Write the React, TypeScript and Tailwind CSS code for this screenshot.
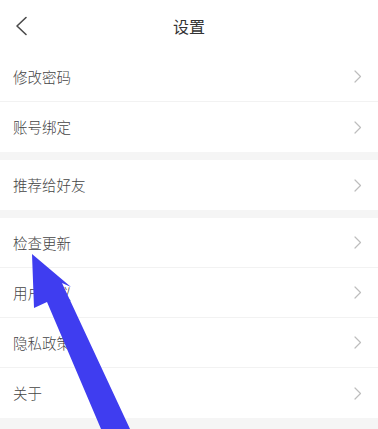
import React from "react";

const groups: string[][] = [
  ["修改密码", "账号绑定"],
  ["推荐给好友"],
  ["检查更新", "用户协议", "隐私政策", "关于"],
];

function Chevron() {
  return (
    <svg width="8" height="13" viewBox="0 0 8 13" fill="none" className="shrink-0">
      <path d="M1 1l5.5 5.5L1 12" stroke="#bdbdbd" strokeWidth="1.2" strokeLinecap="round" strokeLinejoin="round" />
    </svg>
  );
}

function Row({ label, last }: { label: string; last: boolean }) {
  return (
    <div className={`flex h-[50px] items-center justify-between pl-[13px] pr-[16px] ${last ? "" : "border-b border-[#f2f2f2]"}`}>
      <span className="text-[14.5px] font-light text-[#444]">{label}</span>
      <Chevron />
    </div>
  );
}

export default function App() {
  return (
    <div
      className="relative h-[429px] w-[378px] overflow-hidden bg-[#f5f5f5]"
      style={{ fontFamily: '"Noto Sans CJK SC", "Noto Sans", sans-serif' }}
    >
      <header className="relative flex h-[52px] items-center justify-center bg-white">
        <svg width="14" height="20" viewBox="0 0 14 20" fill="none" className="absolute left-[14px] top-[16px]">
          <path d="M12 1.5L3 10l9 8.5" stroke="#4a4a4a" strokeWidth="1.6" strokeLinecap="round" strokeLinejoin="round" />
        </svg>
        <h1 className="text-[16px] text-[#333]">设置</h1>
      </header>

      <div className="flex flex-col gap-[8px]">
        {groups.map((g, gi) => (
          <div key={gi} className="bg-white">
            {g.map((label, i) => (
              <Row key={label} label={label} last={i === g.length - 1} />
            ))}
          </div>
        ))}
      </div>

      {/* annotation arrow */}
      <svg width="378" height="429" viewBox="0 0 378 429" className="pointer-events-none absolute left-0 top-0">
        <polygon
          points="32,254 71,287 62,283 130,429 101,429 47,302 34,308"
          fill="#3f3df0"
        />
      </svg>
    </div>
  );
}
